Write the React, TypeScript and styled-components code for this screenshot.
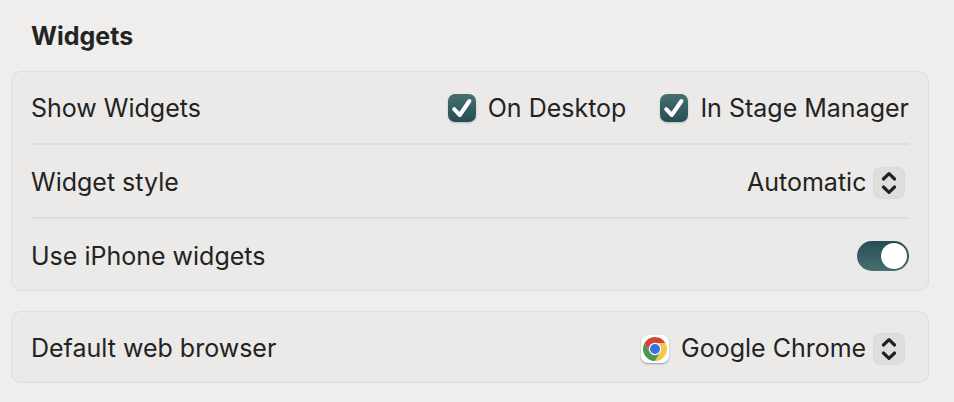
import React, { useId, useState } from 'react';
import styled, { createGlobalStyle } from 'styled-components';

const GlobalStyle = createGlobalStyle`
  * { box-sizing: border-box; }
  body {
    margin: 0;
    background: #efeeec;
    color: #232323;
    font-family: Inter, "Liberation Sans", sans-serif;
    font-size: 25px;
    line-height: 32px;
  }
`;

const Page = styled.main`
  padding: 20px 25px 19px 11px;
`;

const Heading = styled.h2`
  margin: 0 20px 19px;
  font-size: 25px;
  font-weight: 700;
  line-height: 32px;
`;

const Card = styled.section`
  border-radius: 10px;
  background: #ebeae8;
  box-shadow: inset 0 0 0 1px #dfdedc;
  padding: 0 20px;

  & + & { margin-top: 20px; }
`;

const Row = styled.div`
  display: flex;
  align-items: center;
  justify-content: space-between;
  min-height: 72px;
  padding-top: 2px;

  &:not(:last-child) {
    min-height: 74px;
    border-bottom: 2px solid #dfdedc;
  }
`;

const RowLabel = styled.label``;

const Group = styled.div`
  display: flex;
  gap: 34px;
`;

const CheckLabel = styled.label`
  display: flex;
  align-items: center;
  gap: 12px;
`;

const CheckMark = styled.svg`
  grid-area: 1 / 1;
  width: 28px;
  height: 28px;
  pointer-events: none;
`;

const CheckBox = styled.span`
  display: grid;
`;

const CheckInput = styled.input`
  appearance: none;
  grid-area: 1 / 1;
  width: 28px;
  height: 28px;
  margin: 0;
  border-radius: 7px;
  background: #fff;
  box-shadow: 0 1px 2px rgba(0, 0, 0, 0.22);

  &:checked { background: linear-gradient(#47706f, #264d55); }
  &:not(:checked) + ${CheckMark} { visibility: hidden; }
`;

const PopupWrap = styled.div`
  display: flex;
  align-items: center;
  gap: 12px;
  margin: 2px 4px 0 0;
`;

const PopupField = styled.div`
  display: grid;
  align-items: center;
`;

const PopupSelect = styled.select`
  appearance: none;
  grid-area: 1 / 1;
  height: 32px;
  margin: 0;
  padding: 0 38px 2px 0;
  border: 0;
  background: transparent;
  color: inherit;
  font: inherit;
  line-height: 30px;
`;

const PopupArrows = styled.svg`
  grid-area: 1 / 1;
  justify-self: end;
  width: 32px;
  height: 32px;
  border-radius: 8px;
  background: #dfdedc;
  box-shadow: inset 0 0 2px #d2d1cf;
  pointer-events: none;
`;

const BrowserIcon = styled.svg`
  width: 28px;
  height: 28px;
  border-radius: 7px;
  background: #fff;
  box-shadow: 0 1px 2px rgba(0, 0, 0, 0.35);
`;

const Switch = styled.input`
  appearance: none;
  display: flex;
  align-items: center;
  width: 52px;
  height: 30px;
  margin: 0;
  padding: 0 2px;
  border-radius: 15px;
  background: #cfcecc;

  &::before {
    content: "";
    width: 26px;
    height: 26px;
    border-radius: 50%;
    background: #fff;
    box-shadow: 0 0 2px rgba(0, 0, 0, 0.3);
  }

  &:checked {
    justify-content: flex-end;
    background: linear-gradient(#264d55, #47706f);
  }
`;

function Check({ label }: { label: string }) {
  const [on, setOn] = useState(true);
  return (
    <CheckLabel>
      <CheckBox>
        <CheckInput type="checkbox" checked={on} onChange={() => setOn(!on)} />
        <CheckMark viewBox="0 0 28 28" aria-hidden="true">
          <path d="M6.2 15.2 L11.8 21 L21.4 7" fill="none" stroke="#fff" strokeWidth="4" strokeLinecap="round" strokeLinejoin="round" />
        </CheckMark>
      </CheckBox>
      {label}
    </CheckLabel>
  );
}

function Popup({ id, value, icon }: { id: string; value: string; icon?: React.ReactNode }) {
  return (
    <PopupWrap>
      {icon}
      <PopupField>
        <PopupSelect id={id} defaultValue={value}>
          <option>{value}</option>
        </PopupSelect>
        <PopupArrows viewBox="0 0 32 32" aria-hidden="true">
          <path d="M10.4 12 L16 6.6 L21.6 12 M10.4 20 L16 25.4 L21.6 20" fill="none" stroke="#222" strokeWidth="3.2" strokeLinecap="round" strokeLinejoin="round" />
        </PopupArrows>
      </PopupField>
    </PopupWrap>
  );
}

function ChromeLogo() {
  return (
    <BrowserIcon viewBox="0 0 28 28" aria-hidden="true">
      <path d="M14 8 H24.39 A12 12 0 0 1 14 26 L19.2 17 Z" fill="#f3c94d" />
      <path d="M3.61 8 A12 12 0 0 0 14 26 L19.2 17 L8.8 17 Z" fill="#4b9650" />
      <path d="M3.61 8 A12 12 0 0 1 24.39 8 H14 L8.8 17 Z" fill="#d04536" />
      <circle cx="14" cy="14" r="6.2" fill="#fff" />
      <circle cx="14" cy="14" r="5" fill="#3871e0" />
    </BrowserIcon>
  );
}

export default function App() {
  const id = useId();
  const [phone, setPhone] = useState(true);
  return (
    <>
      <GlobalStyle />
      <Page>
        <Heading>Widgets</Heading>
        <Card>
          <Row>
            <span>Show Widgets</span>
            <Group role="group" aria-label="Show Widgets">
              <Check label="On Desktop" />
              <Check label="In Stage Manager" />
            </Group>
          </Row>
          <Row>
            <RowLabel htmlFor={id + 'style'}>Widget style</RowLabel>
            <Popup id={id + 'style'} value="Automatic" />
          </Row>
          <Row>
            <RowLabel htmlFor={id + 'phone'}>Use iPhone widgets</RowLabel>
            <Switch id={id + 'phone'} type="checkbox" role="switch" checked={phone} onChange={() => setPhone(!phone)} />
          </Row>
        </Card>
        <Card>
          <Row>
            <RowLabel htmlFor={id + 'browser'}>Default web browser</RowLabel>
            <Popup id={id + 'browser'} value="Google Chrome" icon={<ChromeLogo />} />
          </Row>
        </Card>
      </Page>
    </>
  );
}
